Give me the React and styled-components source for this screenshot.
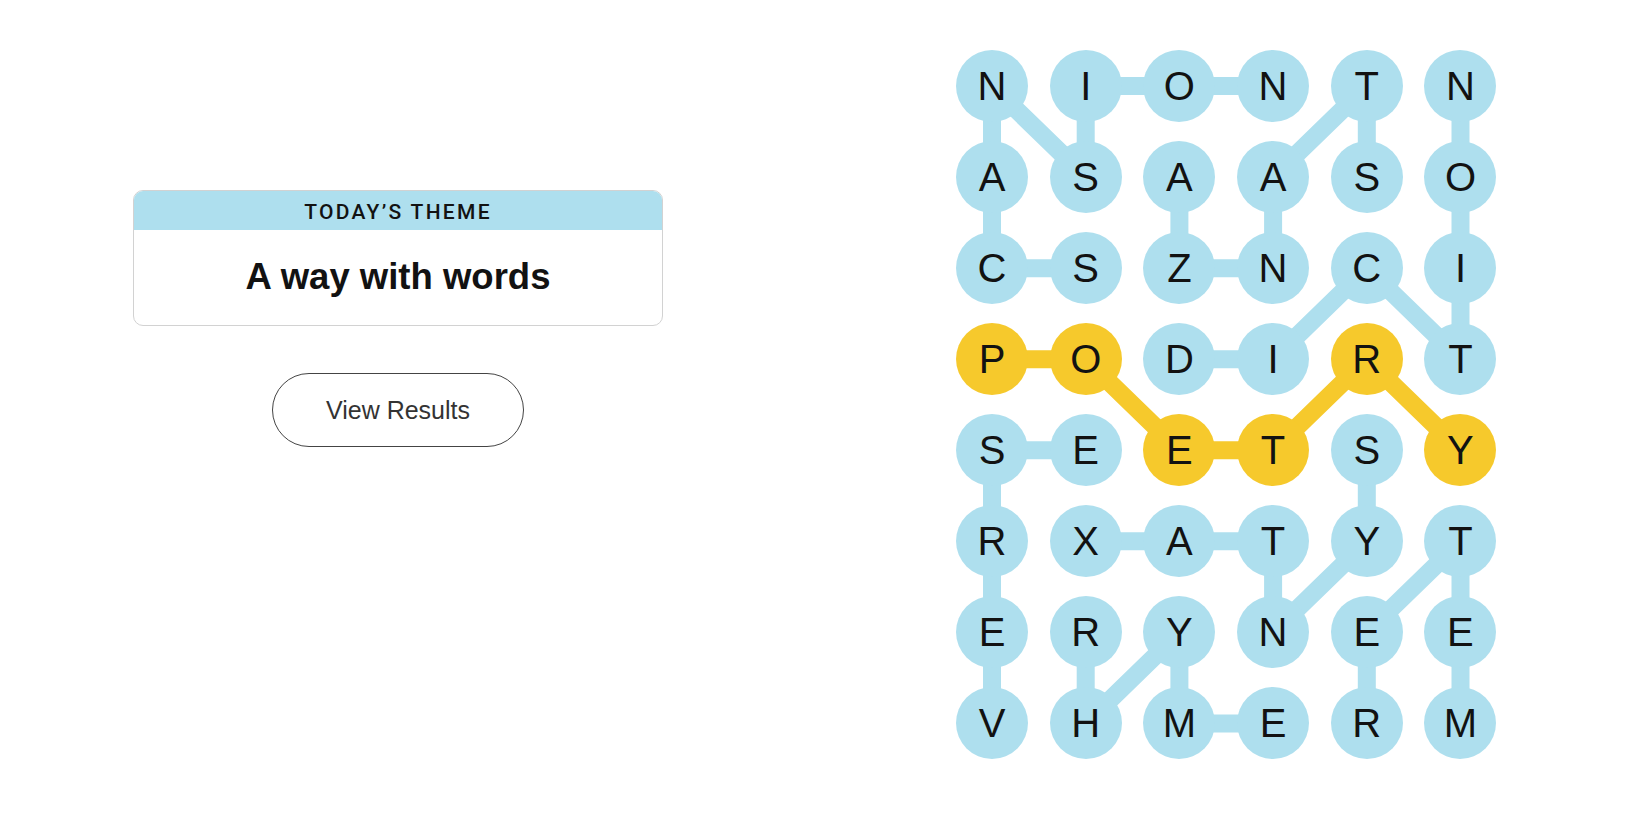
import React from 'react';
import styled, { createGlobalStyle } from 'styled-components';

const GlobalStyle = createGlobalStyle`
  html, body {
    margin: 0;
    padding: 0;
    background: #ffffff;
    font-family: 'Liberation Sans', Arial, sans-serif;
    color: #121212;
  }
`;

const BLUE = '#aedfee';
const YELLOW = '#f6c92c';
const CELL = 72;
const COL_GAP = 21.7;
const ROW_GAP = 19.07;

const rows = ['NIONTN', 'ASAASO', 'CSZNCI', 'PODIRT', 'SEETSY', 'RXATYT', 'ERYNEE', 'VHMERM'];

// found words, cells in reading order [row, col]
const words = [
  { cells: [[2, 1], [2, 0], [1, 0], [0, 0], [1, 1], [0, 1], [0, 2], [0, 3]] },
  { cells: [[1, 4], [0, 4], [1, 3], [2, 3], [2, 2], [1, 2]] },
  { cells: [[3, 2], [3, 3], [2, 4], [3, 5], [2, 5], [1, 5], [0, 5]] },
  { cells: [[7, 0], [6, 0], [5, 0], [4, 0], [4, 1]] },
  { cells: [[4, 4], [5, 4], [6, 3], [5, 3], [5, 2], [5, 1]] },
  { cells: [[7, 5], [6, 5], [5, 5], [6, 4], [7, 4]] },
  { cells: [[6, 1], [7, 1], [6, 2], [7, 2], [7, 3]] },
  { cells: [[3, 0], [3, 1], [4, 2], [4, 3], [3, 4], [4, 5]], spangram: true },
];

const spangramCells = new Set(
  words.filter((w) => w.spangram).flatMap((w) => w.cells.map(([r, c]) => `${r}-${c}`))
);

const Page = styled.div`
  display: flex;
  align-items: flex-start;
  width: 1650px;
  height: 825px;
  box-sizing: border-box;
  padding: 49.5px 0 0 133px;
`;

const Side = styled.div`
  width: 530px;
  margin-top: 140.5px;
  display: flex;
  flex-direction: column;
  align-items: center;
`;

const ThemeCard = styled.div`
  width: 100%;
  height: 136px;
  box-sizing: border-box;
  border: 1px solid #d2d2d2;
  border-radius: 10px;
  overflow: hidden;
  display: flex;
  flex-direction: column;
`;

const ThemeHeader = styled.div`
  height: 39px;
  background: ${BLUE};
  display: flex;
  align-items: center;
  justify-content: center;
  font-family: Roboto, 'Liberation Sans', sans-serif;
  font-weight: 500;
  font-size: 21px;
  letter-spacing: 2.3px;
  color: #121212;
  padding-top: 2px;
  box-sizing: border-box;
`;

const ThemeTitle = styled.div`
  flex: 1;
  display: flex;
  align-items: center;
  justify-content: center;
  font-weight: 700;
  font-size: 36.5px;
  color: #121212;
  padding-bottom: 2px;
`;

const ResultsButton = styled.button`
  margin-top: 47px;
  width: 252px;
  height: 74px;
  border: 1.3px solid #444;
  border-radius: 37px;
  background: #fff;
  font-family: 'Liberation Sans', Arial, sans-serif;
  font-size: 25px;
  color: #333;
  cursor: pointer;
`;

const Board = styled.div`
  position: relative;
  margin-left: 293px;
  display: grid;
  grid-template-columns: repeat(6, ${CELL}px);
  grid-auto-rows: ${CELL}px;
  column-gap: ${COL_GAP}px;
  row-gap: ${ROW_GAP}px;
`;

const Links = styled.svg`
  position: absolute;
  left: 0;
  top: 0;
  overflow: visible;
  pointer-events: none;
`;

const Letter = styled.div`
  position: relative;
  z-index: 1;
  width: ${CELL}px;
  height: ${CELL}px;
  border-radius: 50%;
  background: ${(p) => (p.$spangram ? YELLOW : BLUE)};
  display: flex;
  align-items: center;
  justify-content: center;
  font-size: 40px;
  line-height: 1;
  color: #121212;
`;

const center = ([r, c]) => [c * (CELL + COL_GAP) + CELL / 2, r * (CELL + ROW_GAP) + CELL / 2];

export default function App() {
  const width = 6 * CELL + 5 * COL_GAP;
  const height = 8 * CELL + 7 * ROW_GAP;
  return (
    <>
      <GlobalStyle />
      <Page>
        <Side>
          <ThemeCard>
            <ThemeHeader>TODAY’S THEME</ThemeHeader>
            <ThemeTitle>A way with words</ThemeTitle>
          </ThemeCard>
          <ResultsButton>View Results</ResultsButton>
        </Side>
        <Board>
          <Links width={width} height={height}>
            {words.map((w, i) => (
              <polyline
                key={i}
                points={w.cells.map((cell) => center(cell).join(',')).join(' ')}
                fill="none"
                stroke={w.spangram ? YELLOW : BLUE}
                strokeWidth="18"
                strokeLinejoin="round"
                strokeLinecap="round"
              />
            ))}
          </Links>
          {rows.map((row, r) =>
            row.split('').map((ch, c) => (
              <Letter key={`${r}-${c}`} $spangram={spangramCells.has(`${r}-${c}`)}>
                {ch}
              </Letter>
            ))
          )}
        </Board>
      </Page>
    </>
  );
}
